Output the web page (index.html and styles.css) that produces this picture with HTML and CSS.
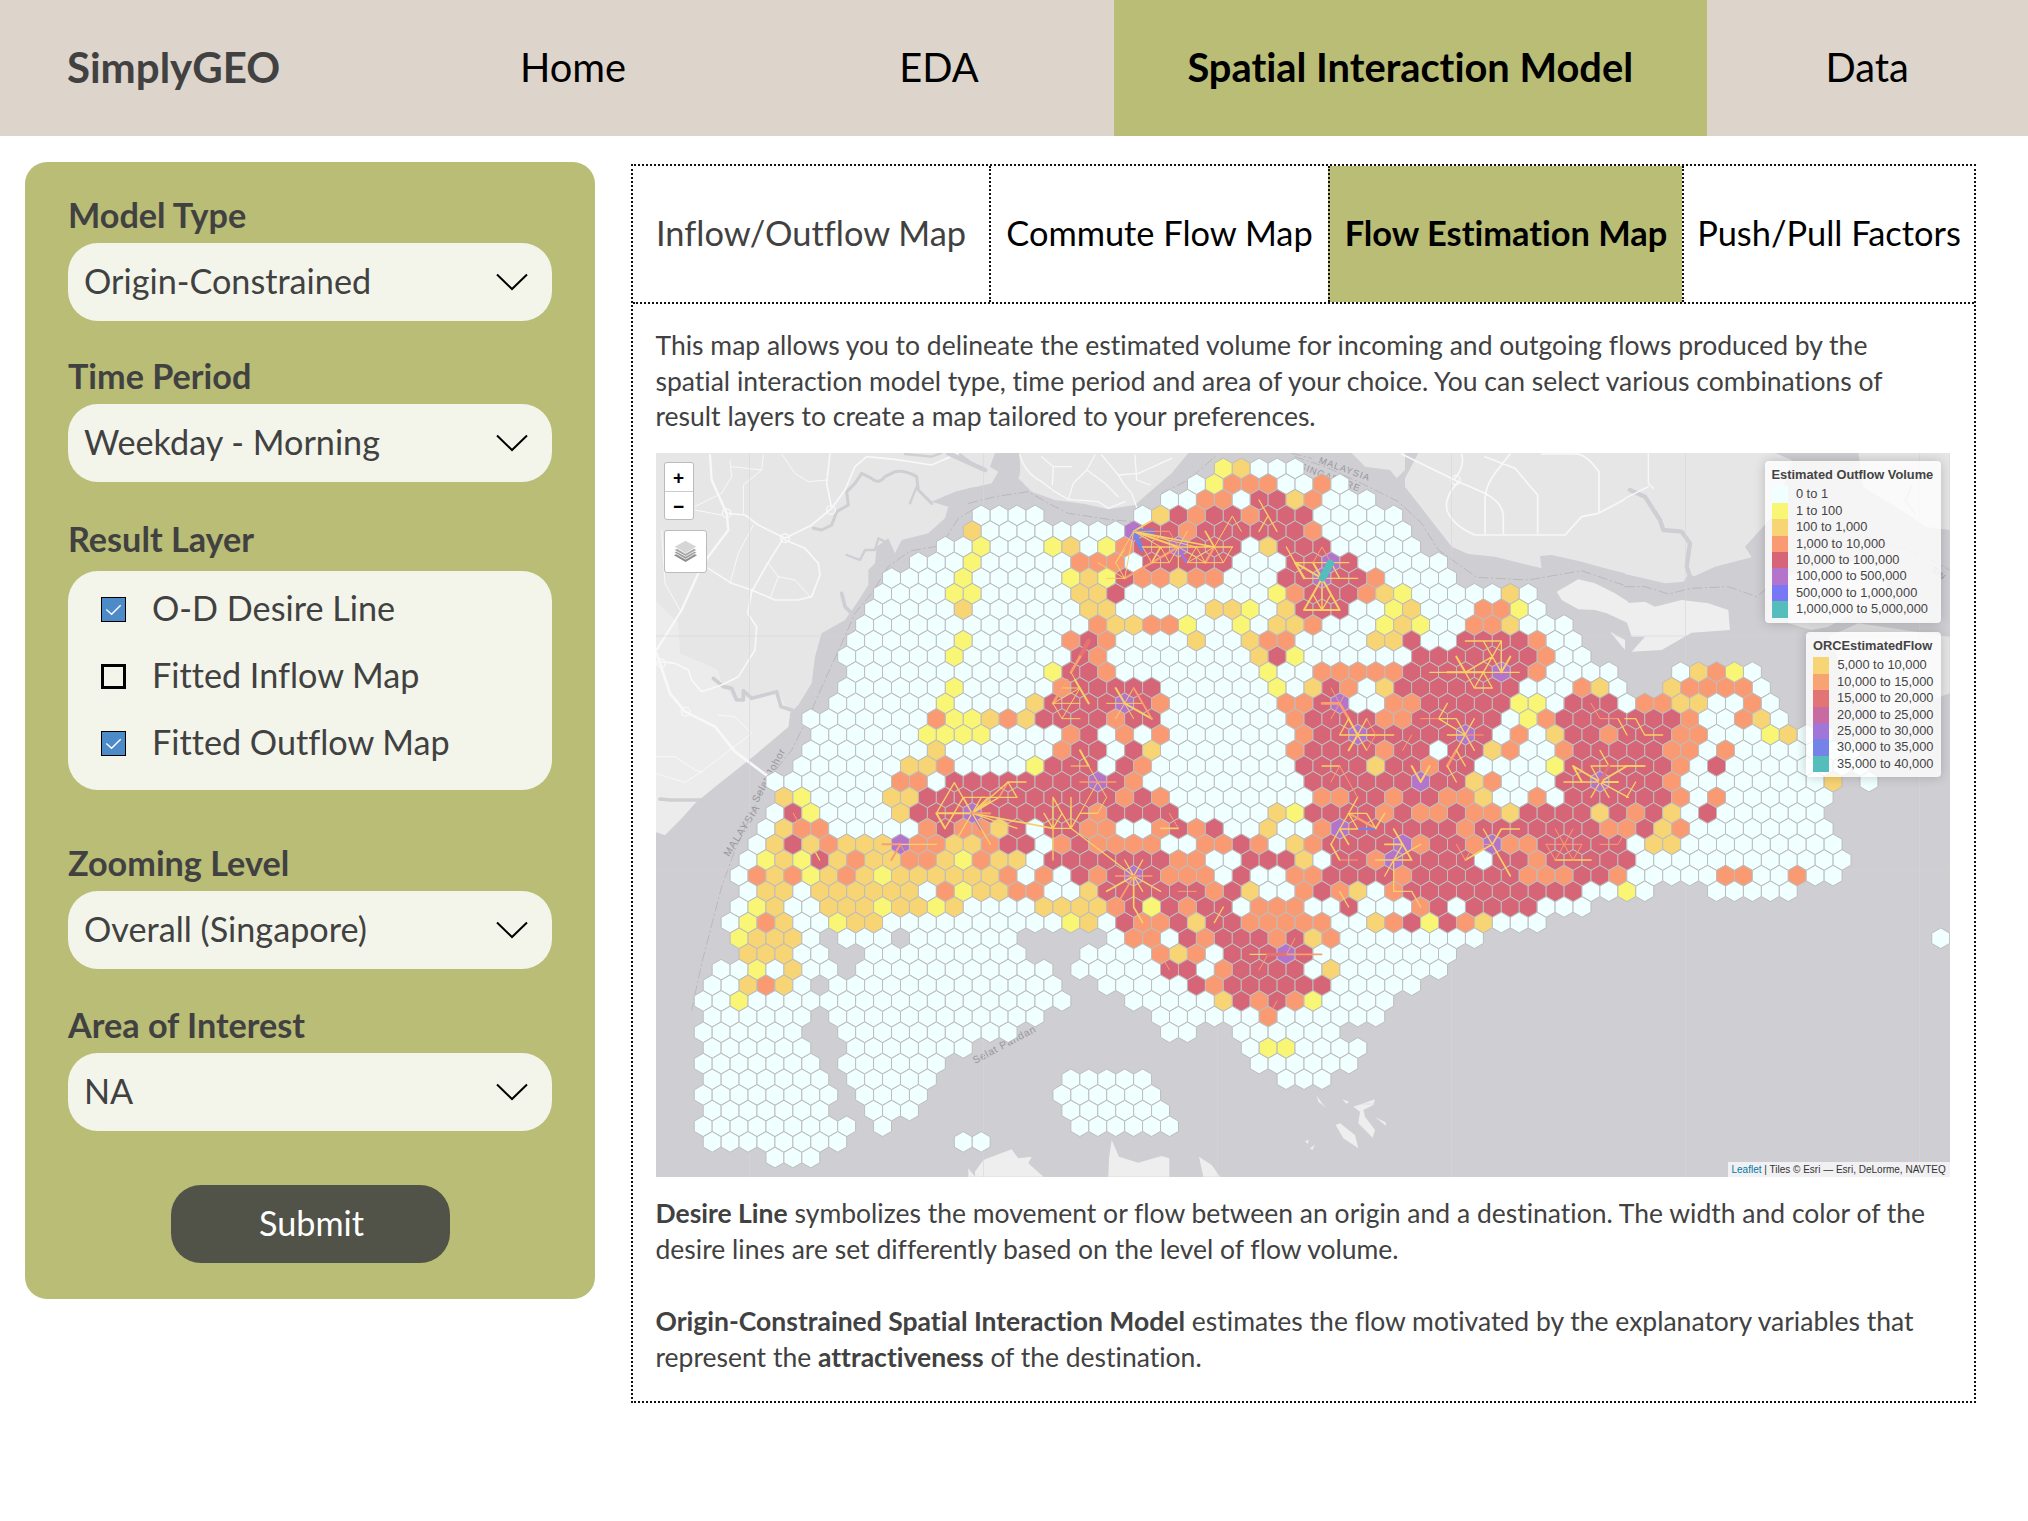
FILE: index.html
```html
<!DOCTYPE html>
<html lang="en">
<head>
<meta charset="utf-8">
<title>SimplyGEO</title>
<link rel="stylesheet" href="styles.css">
</head>
<body>
<nav class="nav">
  <div class="brand">SimplyGEO</div>
  <div class="nav-item">Home</div>
  <div class="nav-item">EDA</div>
  <div class="nav-item active">Spatial Interaction Model</div>
  <div class="nav-item">Data</div>
</nav>
<div class="page">
  <aside class="sidebar">
    <div class="group">
      <div class="label">Model Type</div>
      <div class="field"><span>Origin-Constrained</span><svg class="chev" viewBox="0 0 32 18"><path d="M1 1.5 16 16 31 1.5"/></svg></div>
    </div>
    <div class="group period">
      <div class="label">Time Period</div>
      <div class="field"><span>Weekday - Morning</span><svg class="chev" viewBox="0 0 32 18"><path d="M1 1.5 16 16 31 1.5"/></svg></div>
    </div>
    <div class="group layers">
      <div class="label">Result Layer</div>
      <div class="checks">
        <div class="check"><span class="box on"><svg viewBox="0 0 24 24"><path d="M4.5 12 10 17 19.500 7.500"/></svg></span>O-D Desire Line</div>
        <div class="check"><span class="box"></span>Fitted Inflow Map</div>
        <div class="check"><span class="box on"><svg viewBox="0 0 24 24"><path d="M4.5 12 10 17 19.500 7.500"/></svg></span>Fitted Outflow Map</div>
      </div>
    </div>
    <div class="group zooming">
      <div class="label">Zooming Level</div>
      <div class="field"><span>Overall (Singapore)</span><svg class="chev" viewBox="0 0 32 18"><path d="M1 1.5 16 16 31 1.5"/></svg></div>
    </div>
    <div class="group area">
      <div class="label">Area of Interest</div>
      <div class="field"><span>NA</span><svg class="chev" viewBox="0 0 32 18"><path d="M1 1.5 16 16 31 1.5"/></svg></div>
    </div>
    <button class="submit">Submit</button>
  </aside>
  <main class="panel">
    <div class="tabs">
      <div class="tab muted">Inflow/Outflow Map</div>
      <div class="tab">Commute Flow Map</div>
      <div class="tab current">Flow Estimation Map</div>
      <div class="tab">Push/Pull Factors</div>
    </div>
    <div class="content">
      <p class="text">This map allows you to delineate the estimated volume for incoming and outgoing flows produced by the<br>spatial interaction model type, time period and area of your choice. You can select various combinations of<br>result layers to create a map tailored to your preferences.</p>
      <div class="map">
        <svg class="map-svg" viewBox="656 453 1294 723.500" preserveAspectRatio="none">
          <g id="base"></g>
          <g id="hexes"></g>
          <g id="lines"></g>
        </svg>
        <div class="zoomctl"><span>+</span><span>−</span></div>
        <div class="layerctl">
          <svg viewBox="0 0 26 26"><path d="M1 17 13 11 25 17 13 24Z" fill="#8f8f8f"/><path d="M1 14 13 8 25 14 13 21Z" fill="#9d9d9d" stroke="#fff" stroke-width=".8"/><path d="M1 11.500 13 5 25 11.500 13 18Z" fill="#a8a8a8" stroke="#fff" stroke-width=".8"/><path d="M1 8 13 1.500 25 8 13 15Z" fill="#d6d6d6" stroke="#fff" stroke-width=".8"/></svg>
        </div>
        <div class="legend outflow">
          <b>Estimated Outflow Volume</b>
          <div><i class="c0"></i>0 to 1</div>
          <div><i class="c1"></i>1 to 100</div>
          <div><i class="c2"></i>100 to 1,000</div>
          <div><i class="c3"></i>1,000 to 10,000</div>
          <div><i class="c4"></i>10,000 to 100,000</div>
          <div><i class="c5"></i>100,000 to 500,000</div>
          <div><i class="c6"></i>500,000 to 1,000,000</div>
          <div><i class="c7"></i>1,000,000 to 5,000,000</div>
        </div>
        <div class="legend flow">
          <b>ORCEstimatedFlow</b>
          <div><i class="c2"></i>5,000 to 10,000</div>
          <div><i class="f1"></i>10,000 to 15,000</div>
          <div><i class="f2"></i>15,000 to 20,000</div>
          <div><i class="f3"></i>20,000 to 25,000</div>
          <div><i class="f4"></i>25,000 to 30,000</div>
          <div><i class="f5"></i>30,000 to 35,000</div>
          <div><i class="c7"></i>35,000 to 40,000</div>
        </div>
        <div class="attrib"><a>Leaflet</a> | Tiles © Esri — Esri, DeLorme, NAVTEQ</div>
      </div>
      <p class="text notes"><b>Desire Line</b> symbolizes the movement or flow between an origin and a destination. The width and color of the<br>desire lines are set differently based on the level of flow volume.<br><br><b>Origin-Constrained Spatial Interaction Model</b> estimates the flow motivated by the explanatory variables that<br>represent the <b>attractiveness</b> of the destination.</p>
    </div>
  </main>
</div>
<script src="map.js"></script>
</body>
</html>
```

FILE: styles.css
```css
* { box-sizing: border-box; }
body {
  margin: 0;
  background: #fff;
  color: #414141;
  font-family: Lato, "Open Sans", sans-serif;
  font-variant-ligatures: none;
  white-space: nowrap;
}
.nav {
  display: grid;
  grid-template-columns: 382px 382px 350px 592.500px 321.500px;
  height: 135.500px;
  background: #ddd4cb;
  font-size: 39.800px;
  line-height: 134px;
}
.brand { padding-left: 67px; font-size: 42px; font-weight: 700; }
.nav-item { text-align: center; color: #000; }
.nav-item.active { background: #b9bd76; font-weight: 700; }
.page {
  display: flex;
  align-items: flex-start;
  gap: 36px;
  padding: 26.500px 0 0 25px;
}
.sidebar {
  display: flex;
  flex-direction: column;
  width: 570px;
  height: 1137px;
  padding: 33px 43px 0;
  border-radius: 22px;
  background: #b9bd76;
  font-size: 34.200px;
}
.label { height: 40px; margin-bottom: 8px; line-height: 40px; font-weight: 700; }
.field {
  display: flex;
  align-items: center;
  justify-content: space-between;
  height: 78px;
  padding: 0 24px 4px 16px;
  border-radius: 30px;
  background: #f3f5ea;
}
.chev { width: 32px; height: 18px; margin-top: 4px; fill: none; stroke: #000; stroke-width: 2; }
.period { margin-top: 35px; }
.layers { margin-top: 37px; }
.layers .label { margin-bottom: 12px; }
.zooming { margin-top: 53px; }
.area { margin-top: 36px; }
.checks {
  display: flex;
  flex-direction: column;
  height: 219px;
  padding: 3.500px 0 0 33px;
  border-radius: 30px;
  background: #f3f5ea;
}
.check { display: flex; align-items: center; gap: 26px; height: 66.700px; }
.box { width: 25px; height: 25px; margin-top: 4px; border: 3px solid #000; }
.box.on { border-width: 1.500px; background: #4d8bc8; }
.box svg { display: block; width: 100%; height: 100%; fill: none; stroke: #fff; stroke-width: 1.500; }
.submit {
  align-self: center;
  width: 279px;
  height: 78px;
  margin-top: 53.500px;
  padding: 0 0 3px 3px;
  border: 0;
  border-radius: 30px;
  background: #515248;
  color: #fff;
  font: inherit;
  font-variant-ligatures: none;
}
.panel { width: 1345px; height: 1239px; margin-top: 2px; border: 2px dotted #111; }
.tabs {
  display: grid;
  grid-template-columns: 356px 339px 354px 292px;
  height: 138px;
  border-bottom: 2px dotted #111;
  font-size: 34.400px;
  line-height: 134px;
  color: #000;
}
.tab { text-align: center; }
.tab + .tab { border-left: 2px dotted #111; }
.tab.muted { color: #414141; }
.tab.current { background: #b9bd76; font-weight: 700; }
.content { padding: 24px 0 0 22.500px; }
.text { margin: 0; font-size: 26.500px; line-height: 35.700px; }
.text.notes { padding-top: .5px; line-height: 36px; }
.map { position: relative; width: 1294px; height: 723.500px; margin: 18px 0; overflow: hidden; background: #cfced3; font-family: "Liberation Sans", Arial, sans-serif; }
.map-svg { display: block; width: 100%; height: 100%; }
.zoomctl, .layerctl {
  position: absolute;
  left: 8px;
  border: 1.500px solid #bbb;
  border-radius: 3px;
  background: #fff;
}
.zoomctl { top: 9px; width: 30px; height: 58px; }
.zoomctl span { display: block; height: 28px; color: #000; font-size: 19px; font-weight: 700; line-height: 29px; text-align: center; }
.zoomctl span + span { border-top: 1px solid #ccc; }
.layerctl { top: 77px; width: 43px; height: 43px; padding: 8px; }
.layerctl svg { display: block; width: 25px; height: 25px; }
.legend {
  position: absolute;
  right: 9px;
  padding: 6px 7px;
  border-radius: 4px;
  background: rgba(255, 255, 255, .8);
  box-shadow: 0 0 12px rgba(0, 0, 0, .2);
  color: #444;
  font-size: 12.850px;
  line-height: 16.430px;
}
.legend b { display: block; height: 19.200px; line-height: 16px; }
.legend div { display: flex; height: 16.430px; }
.legend i { width: 16.400px; height: 16.430px; margin-right: 8px; }
.outflow { top: 8px; width: 176px; height: 162px; }
.flow { top: 179px; width: 134.500px; height: 145px; }
.c0 { background: #f0ffff; }
.c1 { background: #f8f674; }
.c2 { background: #f7d474; }
.c3 { background: #f99a72; }
.c4 { background: #d66577; }
.c5 { background: #b574cb; }
.c6 { background: #7878f4; }
.c7 { background: #56bdbd; }
.f1 { background: #f8a373; }
.f2 { background: #e27476; }
.f3 { background: #c96aa0; }
.f4 { background: #a276d8; }
.f5 { background: #7383e8; }
.attrib {
  position: absolute;
  right: 0;
  bottom: 0;
  width: 222px;
  height: 15px;
  padding-left: 4px;
  background: rgba(255, 255, 255, .7);
  color: #333;
  font-size: 10px;
  line-height: 15px;
}
.attrib a { color: #0078a8; }
```

FILE: map.js
```js
const NS = "http://www.w3.org/2000/svg";
const fills = ["#f0ffff", "#f8f674", "#f7d474", "#f99a72", "#d66577", "#b574cb"];

// One entry per hexagon row: "startColumn:classes", classes are legend indexes.
const rows = [
  "29:12000",
  "27:013330030",
  "26:003304423000",
  "15:0000 24:024344344400000",
  "15:2" + "00000000" + "5" + "44" + "3" + "444444" + "3" + "00000",
  "13:001" + "000" + "1201" + "3445" + "444" + "02" + "444" + "00000",
  "12:0001" + "00000" + "333" + "0" + "44444" + "000" + "4454" + "00000",
  "10:0000" + "1" + "00000" + "1214" + "33233" + "000" + "445443" + "0000",
  "10:0000" + "11" + "00000" + "224" + "00000000" + "13" + "444321" + "00000" + "20",
  "9:00000" + "2" + "000000" + "22" + "00000" + "22102" + "444" + "0012" + "000" + "3310",
  "9:0000000000000" + "322331" + "001022" + "3000" + "12100" + "332000",
  "8:000000" + "1" + "00000" + "343" + "0000" + "2002" + "33" + "0000" + "224" + "00" + "4444" + "300",
  "8:000000" + "1" + "000000" + "43" + "00000000" + "241" + "000000" + "4444444" + "300",
  "8:00000000000" + "1443" + "00000000" + "100" + "33333" + "44444" + "543" + "0000 54:02310",
  "8:000000" + "1" + "00000" + "3" + "44444" + "000000" + "102" + "4302" + "4444444" + "000" + "320 54:233330",
  "7:000000" + "1" + "0000" + "2" + "4444" + "543" + "000000" + "33" + "4500" + "33" + "44444" + "110" + "444" + "0" + "33220030",
  "6:0000000" + "3112" + "32" + "4444" + "344" + "0000000" + "3" + "4444" + "33" + "44444" + "013" + "4444444" + "300320",
  "6:000000" + "1111" + "0000" + "340303" + "0000000" + "3445" + "44444" + "54" + "0302" + "443444" + "33" + "0001200",
  "6:0000000" + "2" + "000000" + "344042" + "0000000" + "3" + "4444" + "344" + "0442" + "3003" + "44444" + "3303" + "0000000",
  "5:000000" + "223" + "0000" + "1444043" + "00000000" + "4444" + "24434" + "4" + "0000" + "1" + "444444" + "304" + "00000000",
  "4:0000000" + "330" + "44444444" + "543" + "000000000" + "444444" + "54423" + "000" + "445444" + "3" + "00000000" + "2.0",
  "4:21" + "0000" + "22" + "44444444444" + "343" + "00000000" + "3344344332" + "0030" + "444444" + "303" + "000000",
  "4:041" + "0000" + "2444" + "5" + "444444" + "3" + "4444" + "00000" + "21" + "4444" + "34334332" + "4444" + "2434204" + "000000",
  "3:0233" + "00000" + "34332404433" + "00" + "3434" + "002003" + "5" + "444444" + "3" + "4444444" + "33423" + "00000000",
  "3:02423" + "222" + "5332234403" + "4" + "3333" + "00" + "334302" + "3" + "4444" + "534435" + "33" + "44444" + "022" + "000000000",
  "2:0121423" + "22332132" + "20" + "4444444" + "3300" + "44420" + "4435" + "4444" + "0443" + "44444" + "000000000000",
  "2:032312321" + "222222" + "3030434543330400" + "33" + "4444" + "3" + "444444" + "333443" + "00000" + "3300300",
  "2:0220" + "222222" + "0312233002" + "444444" + "342003" + "43203" + "4444444444" + "0010 56:00000",
  "2:01200" + "222122120000" + "2222" + "34143440" + "33300" + "4000340" + "4444" + "000",
  "1:013200122" + "0000000000" + "1204334244" + "33333" + "0023414320" + "00",
  "2:12220.000.000000.....0330" + "43" + "444342300000000 69:0",
  "2:22200..000000000...0000323044454" + "00000000",
  "1:0010200." + "00000000000" + ".00000" + "4403" + "4444" + "02000000",
  "0:002320." + "0000000000000" + "..00000" + "43" + "444444" + "00000",
  "0:001" + "000000000000000000" + "...00000" + "2434310000",
  "0:000000." + "000000000000" + "......000000" + "3000000",
  "0:000000.." + "0000000000" + "........00..000000",
  "0:000000..0000000 30:0110000",
  "0:0000000.000000 31:000000",
  "0:0000000.00000 20:00000 32:000",
  "0:00000000.0000 20:000000",
  "0:0000000..000 20:000000",
  "0:000000000.0 21:000000",
  "0:00000000 14:00",
  "4:000"
];

function add(parent, name, attrs, text) {
  const el = document.createElementNS(NS, name);
  for (const k in attrs) el.setAttribute(k, attrs[k]);
  if (text) el.textContent = text;
  parent.appendChild(el);
  return el;
}

const W = 17.935, P = 15.663, T = 10.3;
const hexes = document.getElementById("hexes");
rows.forEach((row, r) => {
  const y = 468.4 + P * r;
  row.split(" ").forEach(seg => {
    const [start, codes] = seg.split(":");
    [...codes].forEach((k, i) => {
      if (k === ".") return;
      const x = 703.2 + W * (+start + i + (r % 2) / 2);
      const h = W / 2, q = T / 2;
      add(hexes, "path", {
        d: `M${x} ${y - T}L${x + h} ${y - q}V${y + q}L${x} ${y + T}L${x - h} ${y + q}V${y - q}Z`,
        fill: fills[+k], stroke: "#bdbdbd", "stroke-width": 1
      });
    });
  });
});

// Sheets of the map, each drawn in third-of-a-pixel units from its own origin.
function sheet(parent, x, y) {
  return add(parent, "g", {
    transform: `translate(${x} ${y}) scale(.33333)`, fill: "none",
    "stroke-linecap": "round", "stroke-linejoin": "round"
  });
}

const base = document.getElementById("base");
const LAND = "#e6e6e7", SEA = "#cfced3", ISLE = "#eeeeee";
function land(g, d, c) { add(g, "path", { d, fill: c || LAND }); }
function road(g, d, w) { add(g, "path", { d, stroke: "#f8f8f8", "stroke-width": w || 4 }); }
function river(g, d, w) { add(g, "path", { d, stroke: SEA, "stroke-width": w || 8 }); }
function border(g, d) { add(g, "path", { d, stroke: "#b9b8bc", "stroke-width": 3, "stroke-dasharray": "28 10 4 10" }); }
function label(g, x, y, a, s, t, sp) {
  add(g, "text", { transform: `translate(${x} ${y}) rotate(${a})`, fill: "#98979c", "font-size": s, "letter-spacing": sp || 2 }, t);
}

const a = sheet(base, 655, 450);
land(a, "M0 0H1000V100L900 125 830 155 880 170 870 205 820 250 740 270 720 310 700 265 665 290 660 340 640 360 640 405 605 460 570 510 500 550 480 620 470 700 430 765 405 790 400 830 300 915 180 1010 120 1060 80 1105 30 1155 0 1145Z");
land(a, "M0 450 70 520 75 610 190 660 200 700 240 750 370 725 405 790 400 830 300 915 180 1010 120 1060 80 1105 30 1155 0 1145Z", "#ececed");
river(a, "M830 160 790 120 785 80Q750 60 720 65L690 80Q670 105 650 85L620 70 600 100 575 125 580 165 545 185 530 225 500 240 475 235", 9);
river(a, "M765 160 785 110M910 9 990 70M750 12 830 20 860 9M700 280 670 265 660 300 630 300 615 330 575 315", 7);
river(a, "M175 685 205 710 230 715 245 750 265 750 265 722 290 745 365 725 378 770 410 780M15 1047 45 1050 140 1050M560 430 570 470 590 490", 11);
road(a, "M165 15 170 90 215 190 220 240 160 320 130 370 80 480 5 600", 7);
road(a, "M5 610 45 730 90 785 180 830 240 905 340 980", 8);
road(a, "M215 190 270 195 310 225 390 265 470 225 530 175 570 120 600 50 635 20 720 28 830 45 910 10M530 175 515 100 525 10M385 265 335 345 290 425 278 490 305 530 300 600 250 680 200 705 140 725 110 690 100 660 60 640 20 635M160 355 230 400 290 420 360 450 430 450 470 440 495 375 490 340 450 295 390 270", 5);
road(a, "M340 340 370 380 345 445M370 380 420 390 465 440M295 225 250 310 225 400M120 170 200 130 230 80 225 30M230 50 320 60 325 15M320 60 265 105 265 190M380 12 420 70 460 95 515 90M120 180 200 195M0 920 60 920 120 960 140 965 290 850 240 800 190 795M0 970 90 997 140 965M20 240 30 400 75 480", 3);
for (const [x, y] of [[215, 190], [390, 265], [528, 180], [18, 640], [92, 785]]) add(a, "circle", { cx: x, cy: y, r: 13, stroke: "#f8f8f8", "stroke-width": 4 });
border(a, "M955 178 910 205 875 260 840 290 765 303 700 350 650 430 600 490 560 580 510 690 470 780 410 900 330 1000 240 1200 200 1310 140 1540 110 1680");
label(a, 222, 1222, -58, 31, "MALAYSIA", 3);
label(a, 308, 1060, -62, 31, "Selat Johor");

const b = sheet(base, 975, 450);
land(b, "M0 9H60L45 50 70 65 50 100 0 112Z");
land(b, "M132 9Q140 70 130 85L170 125 240 150 330 162 400 178 480 165 520 130 590 70 640 9Z");
river(b, "M-80 10 30 60", 14);
road(b, "M135 15Q150 70 200 95L240 125 280 148 370 155 400 175 450 155M280 148 295 100 335 60 360 15M380 15 430 75 445 100 470 130 485 172M430 75 490 70 590 25M200 20 235 50 232 105M335 60 390 100 430 140M235 50 290 50M480 15 485 90 525 105", 4);
border(b, "M-20 160 60 140 160 125 220 160 280 190 400 208 470 215M560 130 640 90 720 20M950 10 1010 25");

const c = sheet(base, 1295, 450);
land(c, "M170 9H330L330 60 305 85 285 60 210 50Z");
land(c, "M370 9H990V370L930 355 860 335 770 315 735 318 740 355 600 320 520 312 470 290 400 200 330 110 330 85Z");
land(c, "M785 425 850 388 900 400 960 430 1000 455V520L935 490 900 480 850 478 800 450Z", ISLE);
land(c, "M945 545 990 570V600Z", ISLE);
road(c, "M320 12 490 95 570 130Q625 160 625 200V250M490 95Q440 150 460 190T540 255H810L860 200 910 190 990 148M500 12Q510 50 480 85M645 12 600 70Q570 110 570 150V250M570 20 660 55 728 135V250M740 12H840Q870 9 912 65V190", 5);
add(c, "circle", { cx: 482, cy: 90, r: 14, stroke: "#f8f8f8", "stroke-width": 4 });
border(c, "M0 20 90 50 200 100 310 155 380 220 430 300 545 382 700 390 860 362 985 405");
label(c, 70, 38, 20, 28, "MALAYSIA", 3);
label(c, 12, 56, 21, 28, "SINGAPORE", 3);

const d = sheet(base, 1625, 450);
land(d, "M0 9H450L500 30 455 185 360 290 380 322 270 350 210 378 190 375 175 395 120 400 0 372Z");
land(d, "M700 9H974V240L900 230 860 200 715 110Z");
land(d, "M480 380 560 360 650 330 780 350 790 480 700 480 610 530 560 540 490 520ZM610 560 700 520 974 560V730L780 800 700 760Z");
land(d, "M0 460 60 455 90 470 170 450 250 460 310 480 315 540 200 548 110 600 20 605 60 560 20 560 0 500Z", ISLE);
river(d, "M15 120 60 140 105 210 115 240 170 245 195 280 185 350 195 380", 13);
road(d, "M70 10 70 100 85 115M70 110 0 145", 4);
border(d, "M0 410 60 410 130 432 200 415 310 410 395 440 430 412M720 260 880 310 974 360");
label(d, 918, 362, 38, 24, "SIN", 2);
river(d, "M860 110 840 150 870 190M760 150 740 190", 5);

const b2 = sheet(base, 975, 810);
land(b2, "M0 1085 25 1050 110 1018 130 1045 170 1040 160 1060 205 1100H0Z", ISLE);
land(b2, "M-20 1075V1100H0ZM400 1100 402 1045 410 990 432 1040 490 1058 560 1038 583 1045V1100ZM672 1040 710 1065 735 1100H685Z", ISLE);
label(b2, 0, 762, -28, 31, "Selat Pandan", 2);
const c2 = sheet(base, 1295, 810);
land(c2, "M122 945 135 940 180 975 190 1015 145 985ZM175 890 240 868 235 885 205 900 210 920 240 960 233 983 190 940 195 905ZM240 922 272 937 274 948ZM65 857 92 893 70 875ZM142 868 162 875 155 882ZM30 993 42 990 38 1002ZM45 1015 60 1004 52 1020Z", ISLE);
const grid = { stroke: "#d6d5da", "stroke-width": .6 };
for (const x of [749.5, 983.5, 1217.5, 1451.5, 1685.5, 1919.5]) add(base, "path", { d: `M${x} 453V1177`, ...grid });
for (const y of [636, 870, 1104]) add(base, "path", { d: `M656 ${y}H1950`, ...grid });

const G = "#f7d066", O = "#f8a070", R = "#e27472", V = "#a276d8", B = "#7383e8", TL = "#56bdbd";
const root = document.getElementById("lines");
function lines(g, color, width, d) { add(g, "path", { d, stroke: color, "stroke-width": width }); }

const lb = sheet(root, 975, 450);
lines(lb, B, 14, "M476 244 501 298M476 244H534");
lines(lb, V, 9, "M610 291 634 336M590 291H630");
lines(lb, O, 7, "M449 385 530 338 610 291M718 291 691 338M476 244 610 291");
lines(lb, G, 5, "M476 244 610 291M476 244 718 291M476 244 530 212M503 291H772M691 244 718 291M530 338 557 291");
lines(lb, G, 3, "M476 244 664 291M476 244 557 291 583 338M476 244 449 385 395 385M449 385 368 338M476 244 422 338M449 300 422 338 449 385M503 291 530 338H583L610 291 637 244M610 291V358M664 291 637 338H745L772 291M637 338 718 291 745 338M610 291 691 338 664 291M718 291 772 198 799 244");
lines(lb, O, 3, "M476 244H583L610 291M503 291 530 338");
lines(lb, G, 4, "M852 150 906 244M879 198 852 244M934 291 960 338 990 385M960 338H990M960 338 990 355");
lines(lb, R, 13, "M341 573 315 620");
lines(lb, O, 8, "M315 620 288 667M276 690 234 760");
lines(lb, G, 6, "M300 690 341 760M449 760 530 806M422 714 449 760M315 901 341 948");
lines(lb, G, 3, "M288 667 341 760M261 714H315L234 760H315M234 760 261 806H315M261 806 315 714M395 760H503M449 760 422 806M449 760 476 806M449 760 476 714 530 806M288 948H341L368 996 315 1090H368L395 1042 368 996");
lines(lb, O, 5, "M315 996H422M476 714 530 806M72 1042 99 996M-8 1090H46");
lines(lb, G, 4, "M99 996H153M99 996 126 1042H19L-8 1090 99 996M-8 1090 72 1042M-8 1090 45 1052");

const lc = sheet(root, 1295, 450);
lines(lc, G, 6, "M0 338 81 385M54 338 81 385M0 338 27 385M81 385 27 480H134L81 385M457 667H565M646 620 619 667M484 620 511 667");
lines(lc, G, 4, "M0 338H161M27 385H188M108 338 134 385M81 385V480M54 433 81 480 108 433");
lines(lc, O, 3, "M54 338 81 291 108 338");
lines(lc, TL, 22, "M106 340 83 383");
lines(lc, G, 4, "M511 573H619V667M565 573 592 620 619 573M511 667 592 620 565 667M404 667H673M511 667 538 714H592L565 667 538 714M592 620 619 667");
lines(lc, O, 8, "M81 760H134L161 806M484 901 457 948");
lines(lc, G, 6, "M161 806 188 855 161 901M188 855H242M350 948 377 996 404 948M834 948 915 996H969M834 948 861 996M915 996 996 948");
lines(lc, G, 4, "M161 806 134 855H296M188 855 215 806M188 855 215 901M457 760 431 806 511 855M431 806H484L538 901M538 806 484 901M457 855H511M457 948 484 996M81 948H134M484 901 511 948M807 996H915M888 948H1050M888 948 915 996 888 1042M915 901 942 948M915 996 942 1042M915 996 1000 1042M969 806 996 855M188 1042 161 1090");
lines(lc, O, 3, "M108 714 134 760 161 714M134 760 108 806M215 806 242 855 215 901M350 855 323 901M377 806H431M511 855H565M134 948 108 996M134 948 188 1042M888 760 915 806H969");
lines(lc, R, 8, "M942 948 915 996");
const ld = sheet(root, 1625, 450);
lines(ld, G, 4, "M0 806H32L59 855H113M0 948H59M32 996 5 1042");

const la = sheet(root, 655, 810);
lines(la, G, 6, "M844 10H951M844 10 870 55");
lines(la, G, 4, "M898 -82 844 10M898 -82 951 10M870 55 925 -38H990M870 55 898 10M951 10 910 80M951 10 925 -38M951 10 1000 -38");
lines(la, V, 8, "M951 10 978 57");
lines(la, O, 6, "M682 103H736L709 150");
lines(la, G, 4, "M736 103H844M482 128 494 150");
lines(la, O, 3, "M415 10 440 55M736 103 763 150");
const mb = sheet(root, 975, 810);
lines(mb, V, 6, "M-8 10 19 57");
lines(mb, G, 5, "M-8 10 234 55M476 198 395 244M476 198V291L503 338M557 55H610");
lines(mb, G, 4, "M-8 10 126 55M-8 10 46 103M234 55H288L476 198M234 -38V150M207 10 234 55 261 10 234 -38M261 10 288 55V-38M288 55 315 10H368M476 198 503 150M476 198 449 150M476 198 503 244M476 198 557 244M745 291 718 338M825 433H879");
lines(mb, O, 5, "M422 198H530M476 198 422 291M-8 10H46M934 433H1040");
lines(mb, O, 3, "M610 55 583 10M960 385 934 433M879 433 852 480M557 433 583 479M906 573 879 620M610 244H664");
lines(mb, R, 10, "M879 433H930");
const mc = sheet(root, 1295, 810);
lines(mc, O, 7, "M161 10 242 55");
lines(mc, B, 6, "M188 57H240");
lines(mc, G, 5, "M134 57 161 103M108 103 134 150M296 57 350 150M296 150H350M269 103H323M619 57H673M592 103 619 57M511 150 592 103 646 198M781 150H888M242 55 269 10");
lines(mc, G, 4, "M161 10H215L242 55M161 10 134 57H188L161 10M134 57 108 103M323 103 269 198M242 150H296V244H350L377 291M377 103 296 150M134 244 161 291M565 57 592 103");
lines(mc, O, 3, "M134 150H188M484 103 511 150 538 103H592M781 57 834 150M834 57 781 150M753 103H861L834 150M753 103 781 150M915 103H969L996 57");
```
